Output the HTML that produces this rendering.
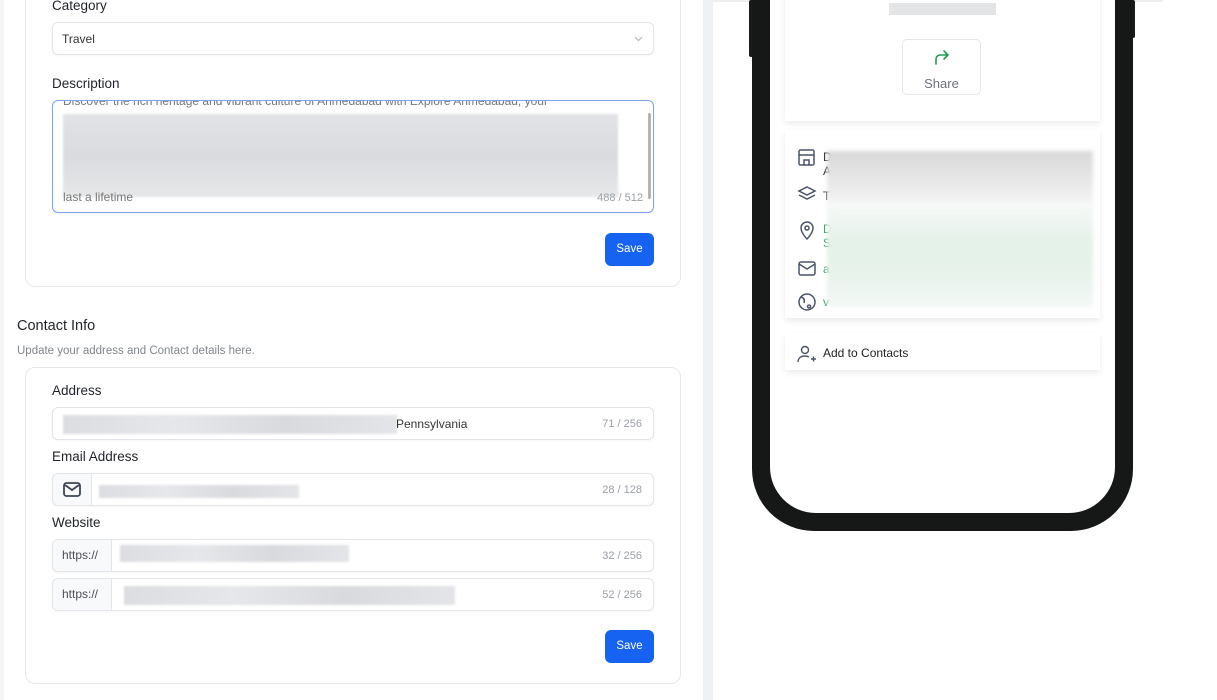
<!DOCTYPE html>
<html><head><style>
*{box-sizing:border-box;margin:0;padding:0}
body{width:1217px;height:700px;overflow:hidden;background:#fff;font-family:"Liberation Sans",sans-serif;position:relative;color:#1f2328}
.a{position:absolute}
.card{position:absolute;left:25px;width:656px;border:1px solid #e6e8eb;border-radius:10px;background:#fff}
.lbl{position:absolute;left:52px;font-size:13.5px;color:#1f2328}
.inp{position:absolute;left:52px;width:602px;height:33px;border:1px solid #e3e5e8;border-radius:6px;background:#fff;box-shadow:0 1px 2px rgba(0,0,0,.04)}
.cnt{position:absolute;right:11px;top:10px;font-size:11px;color:#9aa0a6}
.blur{position:absolute;background:linear-gradient(90deg,#dcdde0,#e6e7ea,#d9dadd,#e4e5e8);filter:blur(1px)}
.btn{position:absolute;left:605px;width:49px;height:33px;background:#1563f0;border-radius:6px;color:#fff;font-size:11.5px;text-align:center;line-height:33px}
.pre{position:absolute;left:0;top:0;bottom:0;border-right:1px solid #e3e5e8;background:#f8f9fa;border-radius:6px 0 0 6px;font-size:12px;color:#4a4f55;line-height:31px;padding-left:9px}
</style></head><body>
<div class="a" style="left:0;top:0;width:4px;height:700px;background:#f4f5f7"></div>
<div class="a" style="left:703px;top:0;width:10px;height:700px;background:#eef2f5"></div>
<div class="a" style="left:713px;top:0;width:450px;height:2px;background:#eceef0"></div>

<div class="card" style="top:-20px;height:307px"></div>
<div class="lbl" style="top:-2px">Category</div>
<div class="inp" style="top:22px"><span class="a" style="left:9px;top:9px;font-size:12px;color:#333">Travel</span><svg class="a" style="right:10px;top:13px" width="9" height="6" viewBox="0 0 9 6"><path d="M1 1l3.5 3.5L8 1" fill="none" stroke="#bbb" stroke-width="1.2"/></svg></div>
<div class="lbl" style="top:76px">Description</div>
<div class="inp" style="top:100px;height:113px;border:1.5px solid #7ea3ee;overflow:hidden">
 <div class="a" style="left:10px;top:-7px;font-size:12px;color:#777">Discover the rich heritage and vibrant culture of Ahmedabad with Explore Ahmedabad, your</div>
 <div class="blur" style="left:10px;top:13px;width:555px;height:83px;background:linear-gradient(180deg,#e2e3e6,#dadbde 50%,#e6e7e9)"></div>
 <div class="a" style="left:10px;top:89px;font-size:12px;color:#777">last a lifetime</div>
 <div class="cnt" style="top:91px;right:10px">488 / 512</div>
 <div class="a" style="right:2px;top:12px;width:3px;height:86px;background:#b5b5b5;border-radius:2px"></div>
</div>
<div class="btn" style="top:233px">Save</div>

<div class="a" style="left:17px;top:318px;font-size:14.5px;color:#1f2328">Contact Info</div>
<div class="a" style="left:17px;top:345px;font-size:11.5px;color:#80868b">Update your address and Contact details here.</div>
<div class="card" style="top:367px;height:317px"></div>
<div class="lbl" style="top:383px">Address</div>
<div class="inp" style="top:407px"><div class="blur" style="left:10px;top:7px;width:334px;height:19px"></div><span class="a" style="left:343px;top:9px;font-size:12px;color:#333">Pennsylvania</span><span class="cnt">71 / 256</span></div>
<div class="lbl" style="top:449px">Email Address</div>
<div class="inp" style="top:473px"><div class="pre" style="width:39px;padding-left:0"><svg class="a" style="left:10px;top:8px" width="18" height="15" viewBox="0 0 18 15"><rect x="1" y="1" width="16" height="13" rx="2.5" fill="none" stroke="#3c4552" stroke-width="1.8"/><path d="M2 3l7 5 7-5" fill="none" stroke="#3c4552" stroke-width="1.8"/></svg></div><div class="blur" style="left:46px;top:11px;width:200px;height:13px"></div><span class="cnt">28 / 128</span></div>
<div class="lbl" style="top:515px">Website</div>
<div class="inp" style="top:539px"><div class="pre" style="width:59px">https://</div><div class="blur" style="left:67px;top:5px;width:229px;height:17px"></div><span class="cnt">32 / 256</span></div>
<div class="inp" style="top:578px"><div class="pre" style="width:59px">https://</div><div class="blur" style="left:71px;top:7px;width:331px;height:19px"></div><span class="cnt">52 / 256</span></div>
<div class="btn" style="top:630px">Save</div>

<!-- phone -->
<div class="a" style="left:749px;top:0;width:5px;height:57px;background:#1a1c1b;border-radius:2px"></div>
<div class="a" style="left:1130px;top:0;width:5px;height:38px;background:#1a1c1b;border-radius:2px"></div>
<div class="a" style="left:752px;top:-80px;width:381px;height:611px;background:#161817;border-radius:0 0 62px 62px"></div>
<div class="a" style="left:770px;top:-80px;width:345px;height:593px;background:#fff;border-radius:0 0 46px 46px"></div>
<div class="a" style="left:785px;top:-10px;width:315px;height:131px;background:#fff;box-shadow:0 3px 6px rgba(0,0,0,.08)"></div>
<div class="a" style="left:889px;top:3px;width:107px;height:12px;background:#e3e4e6"></div>
<div class="a" style="left:902px;top:39px;width:79px;height:56px;border:1px solid #e4e6e9;border-radius:5px;background:#fff">
 <svg class="a" style="left:30px;top:9px" width="18" height="16" viewBox="0 0 18 16"><path d="M3 15V10a4 4 0 0 1 4-4h8M11 2l4 4-4 4" fill="none" stroke="#1f9d55" stroke-width="1.6" stroke-linecap="round" stroke-linejoin="round"/></svg>
 <div class="a" style="left:0;width:77px;top:36px;text-align:center;font-size:13px;color:#6b7280">Share</div>
</div>
<div class="a" style="left:785px;top:130px;width:315px;height:188px;background:#fff;box-shadow:0 3px 6px rgba(0,0,0,.08)"></div>
<svg class="a" style="left:797px;top:147px" width="20" height="170" viewBox="0 0 20 170" fill="none" stroke="#4a5468" stroke-width="1.5">
 <rect x="2" y="3" width="15" height="15" rx="1.5"/><path d="M2 8h15M7 18v-5h5v5"/>
 <path d="M10 40l8 4-8 4-8-4z M2 48l8 4 8-4"/>
 <path d="M10 92s6-6 6-11a6 6 0 0 0-12 0c0 5 6 11 6 11z"/><circle cx="10" cy="81" r="2"/>
 <rect x="2" y="115" width="16" height="13" rx="2"/><path d="M2 117l8 5 8-5"/>
 <circle cx="10" cy="155" r="8"/><path d="M4 150c3 1 4 3 3 6M12 158a1.5 1.5 0 1 0 .1 0"/>
</svg>
<div class="a" style="left:823px;top:150px;font-size:12px;color:#222">D<br>A</div>
<div class="a" style="left:823px;top:189px;font-size:12px;color:#222">T</div>
<div class="a" style="left:823px;top:222px;font-size:12px;color:#2a9d5c">D<br>S</div>
<div class="a" style="left:823px;top:262px;font-size:12px;color:#2a9d5c">a</div>
<div class="a" style="left:823px;top:295px;font-size:12px;color:#2a9d5c">v</div>
<div class="a" style="left:827px;top:151px;width:266px;height:56px;background:linear-gradient(180deg,#d8d8d8,#ececec 70%,#f8f8f8);filter:blur(2px)"></div>
<div class="a" style="left:827px;top:205px;width:266px;height:102px;background:linear-gradient(180deg,#f6f8f7,#e3f1e8 40%,#e8f3ec 70%,#f3f8f5);filter:blur(2px)"></div>
<div class="a" style="left:785px;top:333px;width:315px;height:37px;background:#fff;box-shadow:0 3px 6px rgba(0,0,0,.08)"></div>
<svg class="a" style="left:797px;top:345px" width="20" height="18" viewBox="0 0 20 18" fill="none" stroke="#4a5468" stroke-width="1.4"><circle cx="8" cy="5" r="3.5"/><path d="M1 17c0-4 3-6 7-6 2 0 3 .5 4 1M14 14h5M16.5 11.5v5"/></svg>
<div class="a" style="left:823px;top:346px;font-size:12px;color:#222">Add to Contacts</div>
</body></html>
